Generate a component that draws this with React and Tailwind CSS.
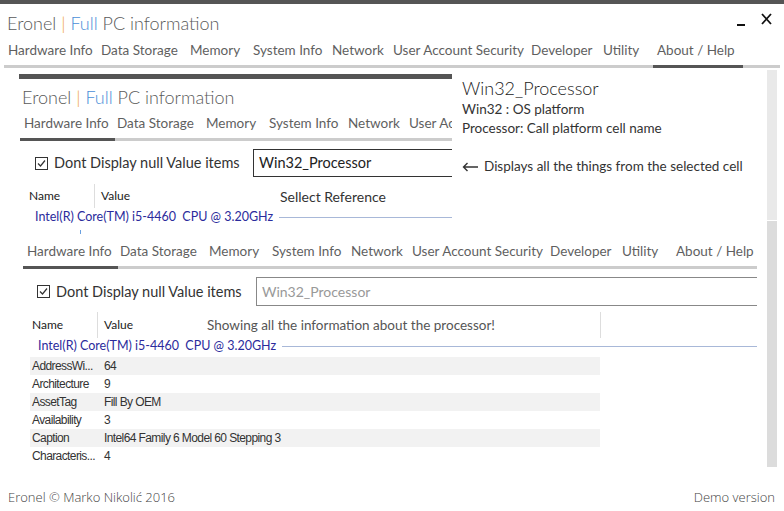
const lato = { fontFamily: 'Lato, "Open Sans", sans-serif' };
const open = { fontFamily: '"Open Sans", "Noto Sans", sans-serif' };
const arial = { fontFamily: '"Liberation Sans", Arial, sans-serif' };

const tabs = [
  ['Hardware Info', 93],
  ['Data Storage', 89],
  ['Memory', 63],
  ['System Info', 79],
  ['Network', 61],
  ['User Account Security', 138],
  ['Developer', 72],
  ['Utility', 54],
  ['About / Help', 100],
];

const rows = [
  ['AddressWi...', '64'],
  ['Architecture', '9'],
  ['AssetTag', 'Fill By OEM'],
  ['Availability', '3'],
  ['Caption', 'Intel64 Family 6 Model 60 Stepping 3'],
  ['Characteris...', '4'],
];

function Title() {
  return (
    <span className="text-[18px] font-light text-[#5a5a5a] whitespace-nowrap leading-none">
      Eronel <span className="text-[#f0a030]">|</span> <span className="text-[#4a8fd8]">Full</span> PC information
    </span>
  );
}

// lastWidth clips the final tab (the inner screenshot cuts it off)
function TabRow({ count = 9, lastWidth }) {
  const list = tabs.slice(0, count);
  return (
    <div className="flex h-[16px] items-center pl-[4px] text-[13.5px] leading-[18px] text-[#5f5f5f] whitespace-nowrap">
      {list.map(([t, w], i) => {
        const clip = lastWidth && i === list.length - 1;
        return (
          <div key={t} className={`shrink-0 ${clip ? 'overflow-hidden' : ''}`} style={{ width: clip ? lastWidth : w }}>
            {t}
          </div>
        );
      })}
    </div>
  );
}

function Check() {
  return (
    <svg width="13" height="13" viewBox="0 0 13 13" className="shrink-0">
      <rect x="0.5" y="0.5" width="12" height="12" fill="white" stroke="#333" />
      <path d="M3 6.5 L5.5 9 L10 3.5" fill="none" stroke="#333" strokeWidth="1.2" />
    </svg>
  );
}

export default function App() {
  return (
    <div className="w-[784px] h-[511px] bg-white overflow-hidden flex flex-col" style={lato}>
      <div className="h-[4px] bg-[#555] shrink-0" />

      {/* header */}
      <div className="flex justify-between h-[36px] shrink-0">
        <div className="pl-[7px] pt-[8px]">
          <Title />
        </div>
        <div className="flex items-start gap-[15px] pr-[12px] pt-[9px]">
          <svg width="9" height="14" viewBox="0 0 9 14">
            <rect x="0" y="11" width="8" height="2" fill="#111" />
          </svg>
          <svg width="11" height="12" viewBox="0 0 11 12">
            <path d="M1 1 L10 11 M10 1 L1 11" stroke="#111" strokeWidth="1.8" />
          </svg>
        </div>
      </div>

      {/* nav */}
      <div className="h-[20px] flex items-center shrink-0 ml-[4px]">
        <TabRow />
      </div>
      <div className="mx-[4px] mt-[5px] h-[3px] bg-[#ccc] flex justify-start shrink-0">
        <div className="ml-[649px] w-[90px] bg-[#555]" />
      </div>

      {/* main */}
      <div className="flex h-[402px] mt-[2px] shrink-0">
        <div className="w-[739px] ml-[18px] overflow-hidden">
          {/* top section: screenshot + notes */}
          <div className="flex h-[170px] gap-[10px]">
            <div className="w-[434px] shrink-0 overflow-hidden">
              <div className="mt-[4px] ml-[1px] h-[5px] bg-[#555]" />
              <div className="h-[36px] flex items-center pl-[4px]">
                <Title />
              </div>
              <div className="pl-[2px]">
                <TabRow count={6} lastWidth={43} />
              </div>
              <div className="ml-[2px] mt-[7px] h-[3px] bg-[#ccc] flex">
                <div className="w-[95px] bg-[#555]" />
              </div>
              <div className="mt-[8px] h-[28px] flex items-center">
                <div className="ml-[17px] w-[218px] flex items-center gap-[6px]">
                  <Check />
                  <span className="text-[14.5px] text-[#333] whitespace-nowrap">Dont Display null Value items</span>
                </div>
                <div className="h-[28px] flex-1 border border-r-0 border-[#333] flex items-center pl-[5px] text-[14.5px] text-[#222]">
                  Win32_Processor
                </div>
              </div>
              <div className="mt-[7px] h-[24px] flex items-center text-[12px] text-[#222]">
                <div className="w-[76px] pl-[11px]">Name</div>
                <div className="w-px h-[24px] bg-[#ddd]" />
                <div className="w-[185px] pl-[6px]">Value</div>
                <div className="text-[14px] text-[#333]">Sellect Reference</div>
              </div>
              <div className="h-[18px] flex items-center">
                <span className="pl-[17px] text-[12.5px] text-[#2b2b9c] whitespace-nowrap">
                  Intel(R) Core(TM) i5-4460&nbsp; CPU @ 3.20GHz
                </span>
                <div className="ml-[6px] flex-1 h-px bg-[#a8b8d8]" />
              </div>
              <div className="mt-[4px] ml-[62px] w-px h-[4px] bg-[#6aa0e0]" />
            </div>
            <div className="pt-[6px] text-[#333] whitespace-nowrap">
              <div className="h-[24px] flex items-center text-[18px] font-light text-[#222] leading-none">Win32_Processor</div>
              <div className="h-[19px] flex items-center text-[13.5px] leading-none">Win32 : OS platform</div>
              <div className="h-[19px] flex items-center text-[13.5px] leading-none">Processor: Call platform cell name</div>
              <div className="mt-[19px] h-[20px] flex items-center gap-[6px] text-[13.5px] leading-none">
                <svg width="16" height="10" viewBox="0 0 16 10">
                  <path d="M16 5 H1.5 M5.5 1 L1.5 5 L5.5 9" fill="none" stroke="#333" strokeWidth="1.4" />
                </svg>
                <span>Displays all the things from the selected cell</span>
              </div>
            </div>
          </div>

          {/* second section */}
          <div className="ml-[5px]">
            <div className="mt-[3px]">
              <TabRow />
            </div>
            <div className="mt-[7px] h-[3px] bg-[#ccc] flex">
              <div className="w-[95px] bg-[#555]" />
            </div>
            <div className="mt-[8px] h-[29px] flex items-center">
              <div className="ml-[14px] w-[219px] flex items-center gap-[6px]">
                <Check />
                <span className="text-[14.5px] text-[#333] whitespace-nowrap">Dont Display null Value items</span>
              </div>
              <div className="h-[29px] flex-1 border border-r-0 border-[#888] flex items-center pl-[5px] text-[14px] text-[#999]">
                Win32_Processor
              </div>
            </div>
            <div className="mt-[6px] h-[26px] flex items-center text-[12px] text-[#222]">
              <div className="w-[74px] pl-[9px]">Name</div>
              <div className="w-px h-[26px] bg-[#ddd]" />
              <div className="w-[109px] pl-[6px]">Value</div>
              <div className="w-[393px] text-[13.5px] text-[#555]">Showing all the information about the processor!</div>
              <div className="w-px h-[26px] bg-[#ddd]" />
            </div>
            <div className="h-[16px] flex items-center">
              <span className="pl-[15px] text-[12.5px] text-[#2b2b9c] whitespace-nowrap">
                Intel(R) Core(TM) i5-4460&nbsp; CPU @ 3.20GHz
              </span>
              <div className="ml-[6px] flex-1 h-px bg-[#a8b8d8]" />
            </div>
            <div className="mt-[3px] ml-[7px] w-[570px]" style={arial}>
              {rows.map(([n, v], i) => (
                <div
                  key={n}
                  className={`h-[18px] flex items-center text-[12px] tracking-[-0.6px] text-[#333] ${i % 2 === 0 ? 'bg-[#f2f2f2]' : ''}`}
                >
                  <div className="w-[74px] pl-[2px] whitespace-nowrap overflow-hidden">{n}</div>
                  <div className="whitespace-nowrap">{v}</div>
                </div>
              ))}
            </div>
          </div>
        </div>

        {/* scrollbar */}
        <div className="ml-[10px] w-[10px] flex flex-col">
          <div className="h-[150px] bg-[#e9e9e9]" />
          <div className="mt-px h-[246px] bg-[#dcdcdc]" />
        </div>
      </div>

      {/* footer */}
      <div className="flex-1 flex justify-between items-start px-[8px] pt-[16px] text-[13px] font-light text-[#444]" style={open}>
        <span>Eronel © Marko Nikolić 2016</span>
        <span className="pr-[1px]">Demo version</span>
      </div>
    </div>
  );
}
